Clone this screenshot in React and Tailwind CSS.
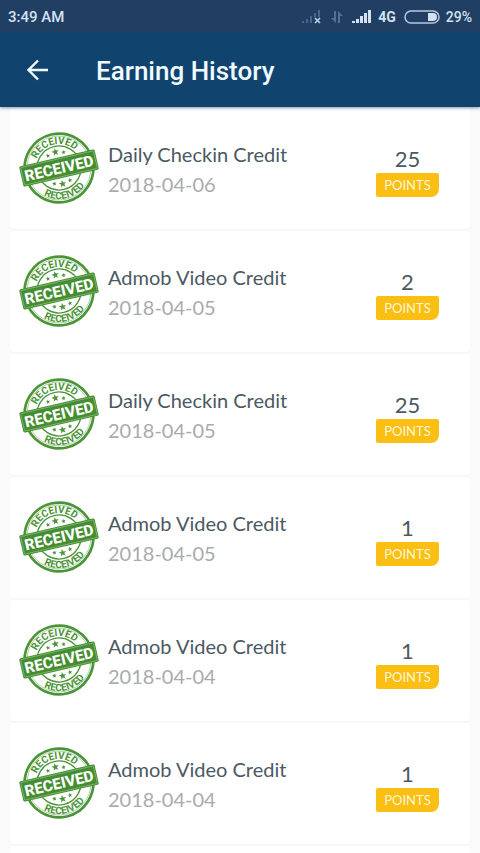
import { useId } from "react";

const history = [
  { title: "Daily Checkin Credit", date: "2018-04-06", points: 25 },
  { title: "Admob Video Credit", date: "2018-04-05", points: 2 },
  { title: "Daily Checkin Credit", date: "2018-04-05", points: 25 },
  { title: "Admob Video Credit", date: "2018-04-05", points: 1 },
  { title: "Admob Video Credit", date: "2018-04-04", points: 1 },
  { title: "Admob Video Credit", date: "2018-04-04", points: 1 },
];

const STAR = "M0 -9 L2.3 -3 8.6 -2.8 3.6 1.2 5.3 7.3 0 3.8 -5.3 7.3 -3.6 1.2 -8.6 -2.8 -2.3 -3Z";

function ReceivedStamp() {
  const id = useId();

  return (
    <svg viewBox="0 0 240 216" className="mb-0.5 h-[72px] w-20 shrink-0" role="img" aria-label="Received">
      <defs>
        <path id={`${id}-top`} d="M48 108 A72 72 0 0 1 192 108" />
        <path id={`${id}-bottom`} d="M27 108 A93 93 0 0 0 213 108" />
      </defs>
      <g transform="rotate(-13 120 108)" fill="#4b9437">
        <circle cx="120" cy="108" r="103" fill="#fff" stroke="#4b9437" strokeWidth="8" />
        <circle cx="120" cy="108" r="96" fill="none" stroke="#8fbd81" strokeWidth="2" />
        <circle cx="120" cy="108" r="66" fill="none" stroke="#4b9437" strokeWidth="4" />
        <g className="font-['Roboto',sans-serif] text-[30px] font-bold" textAnchor="middle">
          <text>
            <textPath href={`#${id}-top`} startOffset="50%">RECEIVED</textPath>
          </text>
          <text>
            <textPath href={`#${id}-bottom`} startOffset="50%">RECEIVED</textPath>
          </text>
        </g>
        <path d={STAR} transform="translate(120 59) scale(1.3)" />
        <path d={STAR} transform="translate(96 65) scale(0.8)" />
        <path d={STAR} transform="translate(144 65) scale(0.8)" />
        <path d={STAR} transform="translate(120 157) scale(1.3)" />
        <path d={STAR} transform="translate(96 151) scale(0.8)" />
        <path d={STAR} transform="translate(144 151) scale(0.8)" />
        <rect x="4" y="77" width="232" height="62" rx="5" fill="#448d30" />
        <rect x="8" y="81" width="224" height="54" rx="3" fill="none" stroke="#8fc27f" strokeWidth="2" />
        <text
          x="120"
          y="125"
          fill="#fff"
          textAnchor="middle"
          className="font-['Roboto',sans-serif] text-[46px] font-extrabold"
        >
          RECEIVED
        </text>
      </g>
    </svg>
  );
}

function StatusBar() {
  return (
    <div className="flex h-8 items-center justify-between bg-[#213f63] px-2 text-sm font-medium text-[#d3e1f2]">
      <span className="pt-1 text-[15px]">3:49 AM</span>
      <div className="flex items-center pt-px">
        <svg viewBox="0 0 20 16" className="mr-2 h-4 w-5" fill="#49658a">
          <path d="M0 12h2v2H0zM4 10h2v4H4zM8 7h2v7H8zM12 4h2v4h-2zM16 1h2v7h-2z" />
          <path d="M13 9l5 5M18 9l-5 5" stroke="#c3d3e8" strokeWidth="1.5" />
        </svg>
        <svg viewBox="0 0 14 16" className="mr-2 h-4 w-3.5" fill="#56708f">
          <path d="M4 2h2v12L1 9h3zM8 14V2l5 5h-3v7z" />
        </svg>
        <svg viewBox="0 0 20 16" className="mr-1.5 h-4 w-5" fill="#d3e1f2">
          <path d="M0 12h3v2H0zM4 10h3v4H4zM8 7h3v7H8zM12 4h3v10h-3zM16 1h3v13h-3z" />
        </svg>
        <span className="mr-2 font-bold">4G</span>
        <svg viewBox="0 0 36 14" className="mr-1.5 h-3.5 w-9">
          <rect x="1" y="1" width="34" height="12" rx="6" fill="none" stroke="#b6c9df" strokeWidth="1.5" />
          <path d="M24 3h5a4 4 0 0 1 0 8h-5z" fill="#d3e1f2" />
        </svg>
        <span>29%</span>
      </div>
    </div>
  );
}

function HistoryCard({ item }) {
  return (
    <li className="flex h-[121px] items-center rounded-sm bg-white pr-[31px] pl-[9px] shadow-[0_1px_1px_#f5f5f5]">
      <ReceivedStamp />
      <div className="ml-[9px] flex-1">
        <h2 className="text-xl leading-[30px] text-[#4b5963]">{item.title}</h2>
        <p className="text-xl leading-[30px] text-[#a9abad]">{item.date}</p>
      </div>
      <div className="flex w-[63px] flex-col items-center pt-1">
        <span className="text-[22px] leading-7 text-[#4b5963]">{item.points}</span>
        <span className="w-full rounded-[2px] rounded-br-lg bg-[#fbbf14] text-center text-[13px] leading-6 text-[#fff6d8]">
          POINTS
        </span>
      </div>
    </li>
  );
}

function App() {
  return (
    <div className="h-screen overflow-hidden bg-[#fafafa] font-['Roboto',sans-serif]">
      {/* Header */}
      <header className="relative shadow-[0_1px_3px_#8795ab]">
        <StatusBar />
        <div className="flex h-[75px] items-center bg-[#10446f] pl-[26px] text-white">
          <button type="button" aria-label="Back" className="mr-[47px]">
            <svg viewBox="0 0 23 22" className="h-[22px] w-[23px]" fill="none" stroke="#f3fbff" strokeWidth="2.4">
              <path d="M22 11H3M12 1.5L2.5 11l9.5 9.5" />
            </svg>
          </button>
          <h1 className="pt-1 text-[26px] font-medium text-[#f0faff]">Earning History</h1>
        </div>
      </header>

      {/* History */}
      <ul className="mx-2.5 space-y-0.5 pt-px font-['Lato',sans-serif]">
        {history.map((item, index) => (
          <HistoryCard key={index} item={item} />
        ))}
        <li className="h-[121px] rounded-sm bg-white" />
      </ul>
    </div>
  );
}

export default App;
